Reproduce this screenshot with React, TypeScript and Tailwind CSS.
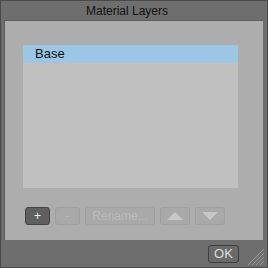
export default function App() {
  const font = { fontFamily: '"Liberation Sans", Arial, sans-serif' };
  return (
    <div
      className="w-[268px] h-[268px] bg-[#6e6e6e] border border-[#4a4a4a] flex flex-col overflow-hidden"
      style={font}
    >
      <div className="h-[19px] flex items-center justify-center text-[12px] text-[#111] pr-[14px]">
        Material Layers
      </div>
      <div className="ml-[3px] w-[259px] h-[220px] bg-[#adadad] border-t border-l border-[#5e5e5e] pt-[24px] pl-[18px]">
        <div className="w-[215px] h-[143px] bg-[#c0c0c0]">
          <div className="h-[18px] bg-[#9bc6e4] text-[13px] text-[#111] pl-[12px] flex items-center">
            Base
          </div>
        </div>
        <div className="mt-[19px] ml-[2px] flex gap-[5px] h-[18px]">
          <div className="w-[25px] h-[18px] rounded-[3px] border border-[#454545] bg-[#5f5f5f] text-[#e4f0e0] text-[12px] flex items-center justify-center">
            +
          </div>
          <div className="w-[25px] h-[18px] rounded-[3px] border border-[#9e9e9e] bg-[#a9a9a9] text-[#bcbcbc] text-[12px] flex items-center justify-center">
            -
          </div>
          <div className="w-[70px] h-[18px] rounded-[3px] border border-[#9e9e9e] bg-[#a9a9a9] text-[#bcbcbc] text-[12px] flex items-center justify-center">
            Rename...
          </div>
          <div className="w-[30px] h-[18px] rounded-[3px] border border-[#9e9e9e] bg-[#a9a9a9] flex items-center justify-center">
            <svg width="16" height="8" viewBox="0 0 16 8">
              <polygon points="8,0 16,8 0,8" fill="#c8c8c8" />
            </svg>
          </div>
          <div className="w-[30px] h-[18px] rounded-[3px] border border-[#9e9e9e] bg-[#a9a9a9] flex items-center justify-center">
            <svg width="16" height="8" viewBox="0 0 16 8">
              <polygon points="0,0 16,0 8,8" fill="#c8c8c8" />
            </svg>
          </div>
        </div>
      </div>
      <div className="flex-1 flex items-start justify-end pt-[5px] pr-[1px]">
        <div className="w-[31px] h-[18px] rounded-[3px] border border-[#3e3e3e] bg-[#6a6a6a] text-[#dedede] text-[13px] flex items-center justify-center">
          OK
        </div>
        <svg width="20" height="20" viewBox="0 0 20 20" className="ml-[7px] mt-[2px]">
          <g stroke="#9a9a9a" strokeWidth="1">
            <line x1="18" y1="2" x2="2" y2="18" />
            <line x1="18" y1="6" x2="6" y2="18" />
            <line x1="18" y1="10" x2="10" y2="18" />
            <line x1="18" y1="14" x2="14" y2="18" />
          </g>
        </svg>
      </div>
    </div>
  );
}
